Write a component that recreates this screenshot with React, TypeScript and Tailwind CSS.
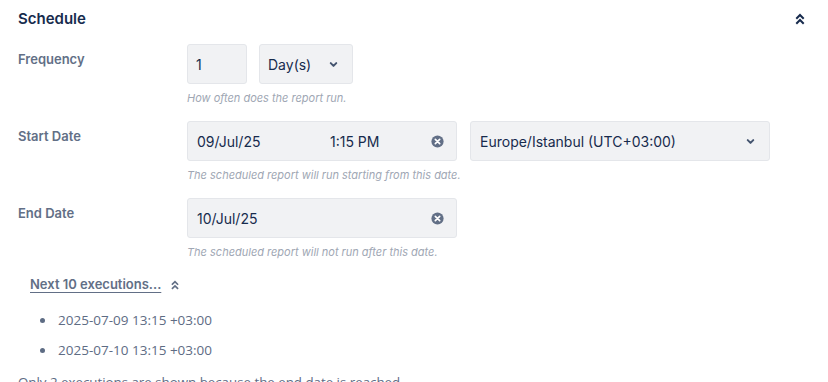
import React from "react";

const font = { fontFamily: '"Inter", "Noto Sans", sans-serif' };

function DoubleUp({ className }: { className?: string }) {
  return (
    <svg viewBox="0 0 12 12" className={className} fill="none" stroke="currentColor" strokeWidth={2} strokeLinecap="square">
      <path d="M3 5 L6 2 L9 5" />
      <path d="M3 10 L6 7 L9 10" />
    </svg>
  );
}

function ChevronDown() {
  return (
    <svg viewBox="0 0 12 12" className="w-[11px] h-[11px] text-[#44546F]" fill="none" stroke="currentColor" strokeWidth={2.2} strokeLinecap="round" strokeLinejoin="round">
      <path d="M3 4.5 L6 7.5 L9 4.5" />
    </svg>
  );
}

function ClearIcon() {
  return (
    <svg viewBox="0 0 16 16" className="w-[13px] h-[13px]">
      <circle cx="8" cy="8" r="7.5" fill="#626F86" />
      <path d="M5.3 5.3 L10.7 10.7 M10.7 5.3 L5.3 10.7" stroke="white" strokeWidth={2} strokeLinecap="round" />
    </svg>
  );
}

const box = "h-[40px] bg-[#F1F2F4] border border-[#E4E6EA] rounded-[3px] flex items-center text-[14px] text-[#172B4D]";
const label = "w-[169px] shrink-0 text-[13px] font-semibold text-[#626F86] pt-[7px] leading-[16px]";
const helper = "mt-[7px] text-[11px] italic text-[#A0A7B4] leading-[14px]";

export default function App() {
  return (
    <div className="w-[828px] h-[382px] overflow-hidden bg-white px-[18px]" style={font}>
      <div className="h-[38px] flex items-center justify-between pr-[4px]">
        <div className="text-[15px] font-semibold text-[#172B4D]">Schedule</div>
        <DoubleUp className="w-[12px] h-[12px] text-[#172B4D]" />
      </div>

      <div className="flex mt-[6px]">
        <div className={label}>Frequency</div>
        <div>
          <div className="flex gap-[12px]">
            <div className={`${box} w-[60px] pl-[8px]`}>1</div>
            <div className={`${box} w-[94px] pl-[8px] pr-[13px] justify-between`}>
              <span>Day(s)</span>
              <ChevronDown />
            </div>
          </div>
          <div className={helper}>How often does the report run.</div>
        </div>
      </div>

      <div className="flex mt-[16px]">
        <div className={label}>Start Date</div>
        <div>
          <div className="flex gap-[13px]">
            <div className={`${box} w-[270px] pl-[9px] pr-[12px]`}>
              <span className="w-[133px]">09/Jul/25</span>
              <span className="flex-1">1:15 PM</span>
              <ClearIcon />
            </div>
            <div className={`${box} w-[300px] pl-[9px] pr-[13px] justify-between`}>
              <span>Europe/Istanbul (UTC+03:00)</span>
              <ChevronDown />
            </div>
          </div>
          <div className={helper}>The scheduled report will run starting from this date.</div>
        </div>
      </div>

      <div className="flex mt-[16px]">
        <div className={label}>End Date</div>
        <div>
          <div className={`${box} w-[270px] pl-[9px] pr-[12px] justify-between`}>
            <span>10/Jul/25</span>
            <ClearIcon />
          </div>
          <div className={helper}>The scheduled report will not run after this date.</div>
        </div>
      </div>

      <div className="mt-[16px] pl-[12px] flex items-center gap-[9px]">
        <span className="text-[13px] font-semibold text-[#626F86] underline underline-offset-[3px]">Next 10 executions...</span>
        <DoubleUp className="w-[10px] h-[10px] text-[#626F86]" />
      </div>

      <ul className="mt-[11px] pl-[22px] text-[13.5px] text-[#5E6C84]" style={{ fontFamily: '"Open Sans", "Noto Sans", sans-serif' }}>
        <li className="flex items-center h-[30px]">
          <span className="w-[5px] h-[5px] rounded-full bg-[#5E6C84] mr-[13px]" />
          2025-07-09 13:15 +03:00
        </li>
        <li className="flex items-center h-[30px]">
          <span className="w-[5px] h-[5px] rounded-full bg-[#5E6C84] mr-[13px]" />
          2025-07-10 13:15 +03:00
        </li>
      </ul>
      <div className="mt-[6px] text-[13.3px] leading-[20px] text-[#5E6C84]" style={{ fontFamily: '"Open Sans", "Noto Sans", sans-serif' }}>
        Only 2 executions are shown because the end date is reached.
      </div>
    </div>
  );
}
